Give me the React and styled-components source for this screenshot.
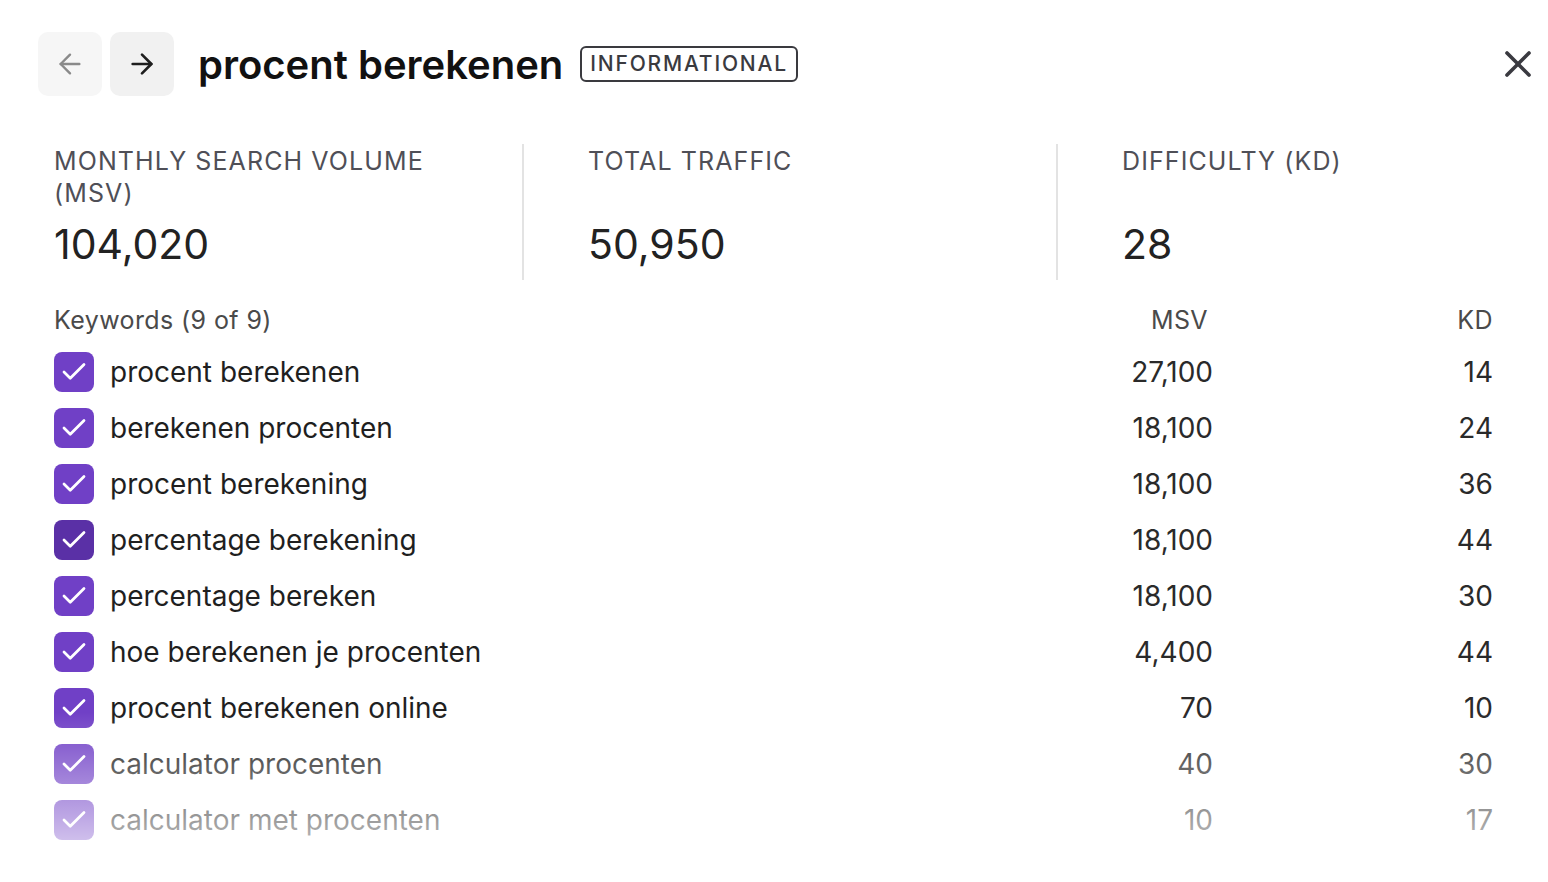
import React from 'react';
import styled, {createGlobalStyle, css} from 'styled-components';
import {ArrowLeft, ArrowRight, X, Check} from 'lucide-react';

const GlobalStyle = createGlobalStyle`
  html, body {
    margin: 0;
    padding: 0;
    background: #ffffff;
    font-family: Inter, "Noto Sans", sans-serif;
    color: #1f1f1f;
  }
`;

const Panel = styled.div`
  position: relative;
  width: 1548px;
  height: 882px;
  overflow: hidden;
  background: #fff;
`;

const Header = styled.div`
  display: flex;
  align-items: center;
  padding: 32px 8px 0 38px;
  height: 64px;
`;

const NavButton = styled.button`
  width: 64px;
  height: 64px;
  border: none;
  border-radius: 10px;
  margin-right: 8px;
  display: flex;
  align-items: center;
  justify-content: center;
  padding: 0;
  background: ${p => p.disabled ? '#f6f6f6' : '#f1f1f1'};
  color: ${p => p.disabled ? '#8a8a8a' : '#1e1e1e'};
  cursor: pointer;
`;

const Title = styled.h1`
  margin: 0 17px 0 16px;
  font-size: 40px;
  font-weight: 600;
  letter-spacing: 0;
  color: #111;
`;

const Badge = styled.span`
  border: 2px solid #3a3a3f;
  border-radius: 6px;
  padding: 3px 8px;
  font-size: 21px;
  font-weight: 500;
  letter-spacing: 1.8px;
  line-height: 26px;
  color: #3a3a3f;
`;

const CloseButton = styled.button`
  margin-left: auto;
  border: none;
  background: none;
  padding: 0;
  display: flex;
  color: #3a3a40;
  cursor: pointer;
`;

const Stats = styled.div`
  display: grid;
  grid-template-columns: 468px 534px 1fr;
  margin: 48px 0 0 54px;
`;

const Stat = styled.div`
  height: 136px;
  ${p => p.$divider && css`
    border-left: 2px solid #e3e3e3;
    padding-left: 64px;
  `}
`;

const StatLabel = styled.div`
  font-size: 25px;
  line-height: 32px;
  height: 64px;
  letter-spacing: 1.1px;
  color: #4f4f57;
  max-width: 430px;
  margin-top: 1px;
`;

const StatValue = styled.div`
  font-size: 41px;
  line-height: 48px;
  margin-top: 11px;
  color: #222;
  font-weight: 400;
`;

const Table = styled.div`
  margin: 24px 55px 0 54px;
`;

const Row = styled.div`
  display: flex;
  align-items: center;
  height: ${p => p.$head ? '32px' : '56px'};
  margin-bottom: ${p => p.$head ? '8px' : '0'};
`;

const HeadCell = styled.div`
  font-size: 25px;
  letter-spacing: 0.4px;
  color: #4a4a4a;
  flex: ${p => p.$grow ? 1 : 'none'};
  width: ${p => p.$w || 'auto'};
  text-align: ${p => p.$right ? 'right' : 'left'};
  padding-right: ${p => p.$pad || '0'};
  box-sizing: border-box;
`;

const Box = styled.span`
  width: 40px;
  height: 40px;
  border-radius: 8px;
  background: ${p => p.$hover ? '#5a30a6' : '#7040c6'};
  display: flex;
  align-items: center;
  justify-content: center;
  color: #fff;
  margin-right: 16px;
  flex: none;
`;

const Name = styled.div`
  flex: 1;
  font-size: 28px;
  color: #1f1f1f;
`;

const Num = styled.div`
  width: ${p => p.$w};
  text-align: right;
  font-size: 28px;
  color: #2a2a2a;
  padding-right: ${p => p.$pad || '0'};
  box-sizing: border-box;
`;

const Fade = styled.div`
  position: absolute;
  left: 0;
  right: 0;
  bottom: 0;
  height: 170px;
  background: linear-gradient(to bottom, rgba(255,255,255,0) 0%, rgba(255,255,255,0.75) 85%, rgba(255,255,255,0.85) 100%);
  pointer-events: none;
`;

const stats = [
  {label: 'MONTHLY SEARCH VOLUME (MSV)', value: '104,020'},
  {label: 'TOTAL TRAFFIC', value: '50,950'},
  {label: 'DIFFICULTY (KD)', value: '28'},
];

const keywords = [
  ['procent berekenen', '27,100', '14'],
  ['berekenen procenten', '18,100', '24'],
  ['procent berekening', '18,100', '36'],
  ['percentage berekening', '18,100', '44'],
  ['percentage bereken', '18,100', '30'],
  ['hoe berekenen je procenten', '4,400', '44'],
  ['procent berekenen online', '70', '10'],
  ['calculator procenten', '40', '30'],
  ['calculator met procenten', '10', '17'],
];

const App = () => {
  return (
    <Panel>
      <GlobalStyle />
      <Header>
        <NavButton disabled><ArrowLeft size={32} strokeWidth={1.8} /></NavButton>
        <NavButton><ArrowRight size={32} strokeWidth={2} /></NavButton>
        <Title>procent berekenen</Title>
        <Badge>INFORMATIONAL</Badge>
        <CloseButton><X size={44} strokeWidth={2} /></CloseButton>
      </Header>

      <Stats>
        {stats.map((s, k) => (
          <Stat key={s.label} $divider={k > 0}>
            <StatLabel>{s.label}</StatLabel>
            <StatValue>{s.value}</StatValue>
          </Stat>
        ))}
      </Stats>

      <Table>
        <Row $head>
          <HeadCell $grow>Keywords (9 of 9)</HeadCell>
          <HeadCell $w="200px" $right $pad="5px">MSV</HeadCell>
          <HeadCell $w="280px" $right>KD</HeadCell>
        </Row>
        {keywords.map(([name, msv, kd], k) => (
          <Row key={name}>
            <Box $hover={k === 3}><Check size={30} strokeWidth={2.2} /></Box>
            <Name>{name}</Name>
            <Num $w="200px">{msv}</Num>
            <Num $w="280px">{kd}</Num>
          </Row>
        ))}
      </Table>
      <Fade />
    </Panel>
  );
};

export default App;
